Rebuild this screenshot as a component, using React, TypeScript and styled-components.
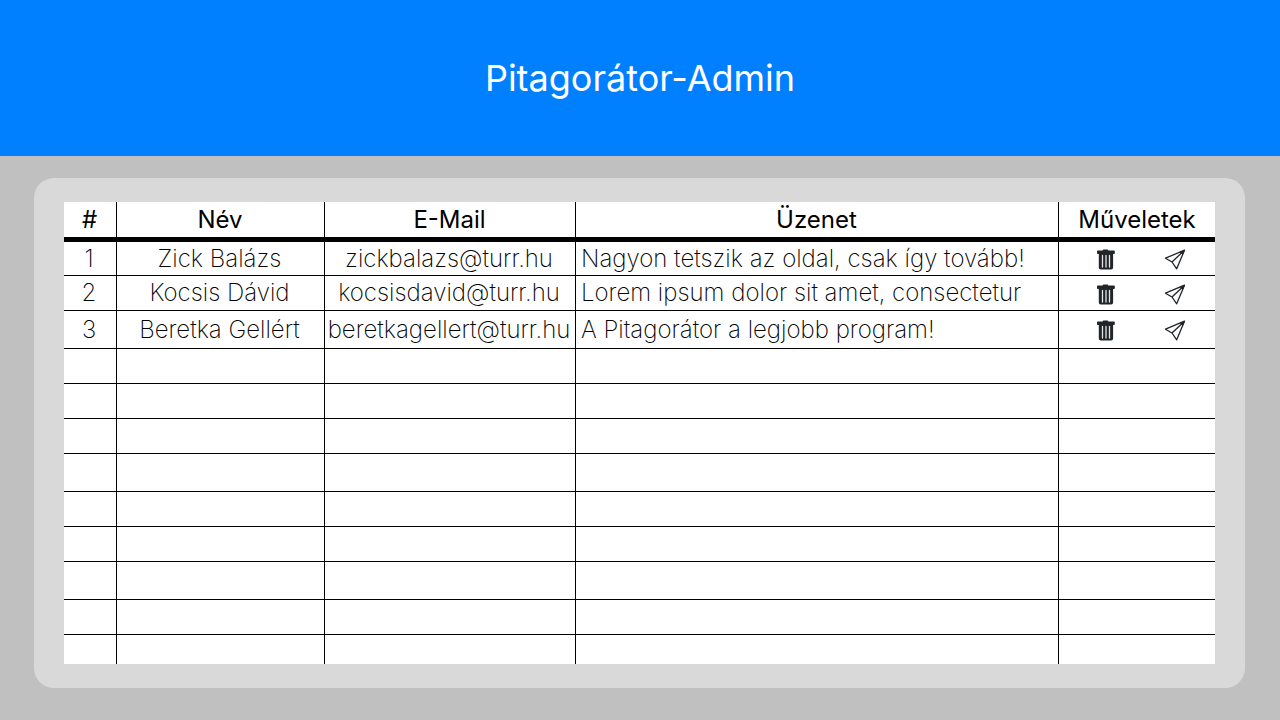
import React from 'react';
import styled, { createGlobalStyle } from 'styled-components';

const GlobalStyle = createGlobalStyle`
  * { box-sizing: border-box; }
  body {
    margin: 0;
    background: #c0c0c0;
    font-family: Inter, "Liberation Sans", sans-serif;
    color: #000;
  }
`;

const Header = styled.header`
  display: flex;
  align-items: center;
  justify-content: center;
  min-height: 156px;
  background: #0080ff;
`;

const Title = styled.h1`
  margin: 0;
  color: #fff;
  font-size: 36px;
  font-weight: 380;
  line-height: 44px;
`;

const Main = styled.main`
  padding: 22px 35px 32px 34px;
`;

const Panel = styled.section`
  padding: 24px 30px;
  border-radius: 20px;
  background: #d9d9d9;
`;

const Table = styled.table`
  width: 100%;
  table-layout: fixed;
  border-collapse: separate;
  border-spacing: 0;
  background: #fff;
  font-size: 24px;
  line-height: 28px;
`;

const Column = styled.col<{ $width?: number }>`
  width: ${({ $width }) => ($width ? `${$width}px` : 'auto')};
`;

const HeadCell = styled.th`
  height: 40px;
  padding: 1px 1px 0 0;
  border-right: 1px solid #000;
  border-bottom: 5px solid #000;
  font-weight: 400;
  white-space: nowrap;
  &:last-child {
    padding-right: 0;
    border-right: 0;
  }
`;

const Row = styled.tr<{ $height: number }>`
  height: ${({ $height }) => $height}px;
  &:last-child > td { border-bottom: 0; }
`;

const Cell = styled.td<{ $align?: 'left' | 'center' }>`
  padding: ${({ $align }) => ($align === 'left' ? '0 0 0 5px' : '0 2px 0 0')};
  border-right: 1px solid #000;
  border-bottom: 1px solid #000;
  font-weight: 240;
  text-align: ${({ $align }) => $align ?? 'center'};
  vertical-align: middle;
  white-space: nowrap;
  &:last-child { border-right: 0; }
`;

const Actions = styled.div`
  display: flex;
  gap: 47px;
  padding: 3px 0 0 36px;
`;

const IconButton = styled.button`
  display: flex;
  width: 22px;
  height: 22px;
  padding: 0;
  border: 0;
  background: none;
  color: #212529;
  cursor: pointer;
`;

const TrashIcon = () => (
  <svg width="22" height="22" viewBox="0 0 22 22" aria-hidden="true">
    <path
      fill="currentColor"
      d="M8.5 .4h4q.6 0 .8 1H19q.8 0 .8 1V4q0 1-.8 1h-.9v13.600q0 2-2 2H5.800q-2 0-2-2V5H2.800Q2 5 2 4V2.400q0-1 .8-1h4.900q.2-1 .8-1z"
    />
    <path stroke="#e4e4e5" strokeWidth="1.300" strokeLinecap="round" d="M7.500 6.500v11.500M11 6.500v11.500M14.500 6.500v11.500" />
  </svg>
);

const SendIcon = () => (
  <svg width="22" height="22" viewBox="0 0 22 22" aria-hidden="true">
    <path
      fill="none"
      stroke="currentColor"
      strokeWidth="1.300"
      strokeLinejoin="round"
      d="M20.500 1.200 1.500 9.200 8 13 12.700 19.800zM20.500 1.200 8 13"
    />
    <path fill="currentColor" d="M20.800 .9 15.500 3.100 18.800 6z" />
  </svg>
);

const messages = [
  { name: 'Zick Balázs', email: 'zickbalazs@turr.hu', text: 'Nagyon tetszik az oldal, csak így tovább!', height: 34 },
  { name: 'Kocsis Dávid', email: 'kocsisdavid@turr.hu', text: 'Lorem ipsum dolor sit amet, consectetur', height: 35 },
  { name: 'Beretka Gellért', email: 'beretkagellert@turr.hu', text: 'A Pitagorátor a legjobb program!', height: 38 },
];

const emptyRows = [35, 35, 35, 38, 35, 35, 38, 35, 29];

export default function App() {
  return (
    <>
      <GlobalStyle />
      <Header>
        <Title>Pitagorátor-Admin</Title>
      </Header>
      <Main>
        <Panel>
          <Table>
            <colgroup>
              <Column $width={53} />
              <Column $width={208} />
              <Column $width={251} />
              <Column />
              <Column $width={156} />
            </colgroup>
            <thead>
              <tr>
                <HeadCell scope="col">#</HeadCell>
                <HeadCell scope="col">Név</HeadCell>
                <HeadCell scope="col">E-Mail</HeadCell>
                <HeadCell scope="col">Üzenet</HeadCell>
                <HeadCell scope="col">Műveletek</HeadCell>
              </tr>
            </thead>
            <tbody>
              {messages.map((message, index) => (
                <Row key={message.email} $height={message.height}>
                  <Cell>{index + 1}</Cell>
                  <Cell>{message.name}</Cell>
                  <Cell>{message.email}</Cell>
                  <Cell $align="left">{message.text}</Cell>
                  <Cell>
                    <Actions>
                      <IconButton type="button" aria-label={`Törlés: ${message.name}`}>
                        <TrashIcon />
                      </IconButton>
                      <IconButton type="button" aria-label={`Válasz: ${message.name}`}>
                        <SendIcon />
                      </IconButton>
                    </Actions>
                  </Cell>
                </Row>
              ))}
              {emptyRows.map((height, index) => (
                <Row key={index} $height={height}>
                  <Cell />
                  <Cell />
                  <Cell />
                  <Cell />
                  <Cell />
                </Row>
              ))}
            </tbody>
          </Table>
        </Panel>
      </Main>
    </>
  );
}
